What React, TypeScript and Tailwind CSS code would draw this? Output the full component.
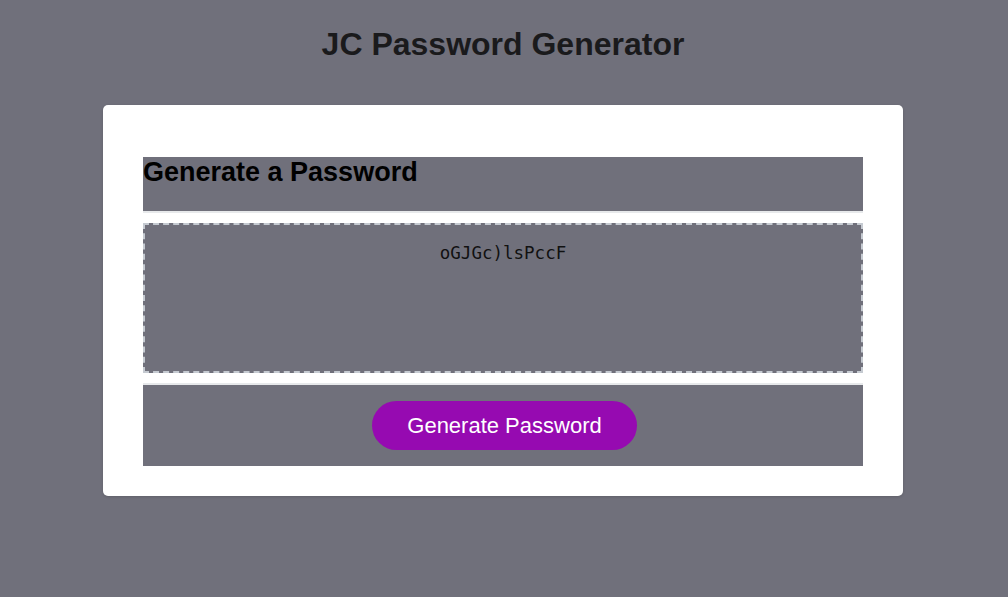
import React from "react";

export default function App() {
  return (
    <div
      className="min-h-[597px] w-full bg-[#70707b] pt-[26px] pr-[2px]"
      style={{ fontFamily: '"Liberation Sans", Arial, sans-serif' }}
    >
      <h1 className="text-center text-[32px] font-bold leading-[37px] text-[#1a1a1c]">
        JC Password Generator
      </h1>
      <div className="mx-auto mt-[42px] w-[800px] rounded-[5px] bg-white px-10 pt-[52px] pb-[30px] shadow-[0_1px_3px_rgba(0,0,0,0.15)]">
        <div className="h-[56px] border-b-2 border-[#e7e9eb] bg-[#70707b]">
          <h2 className="text-[27px] font-bold leading-[30px] text-black">
            Generate a Password
          </h2>
        </div>
        <div
          className="mt-[10px] h-[150px] border-2 border-dashed border-[#c5cad1] bg-[#70707b] pt-[18px] text-center text-[17.5px] leading-[20px] text-[#111]"
          style={{ fontFamily: '"DejaVu Sans Mono", "Liberation Mono", monospace' }}
        >
          oGJGc)lsPccF
        </div>
        <div className="mt-[10px] flex h-[83px] items-center justify-center border-t-2 border-[#e7e9eb] bg-[#70707b]">
          <button className="ml-[3px] flex h-[49px] items-center rounded-full bg-[#960ab1] px-[35px] text-[22px] text-white">
            Generate Password
          </button>
        </div>
      </div>
    </div>
  );
}
